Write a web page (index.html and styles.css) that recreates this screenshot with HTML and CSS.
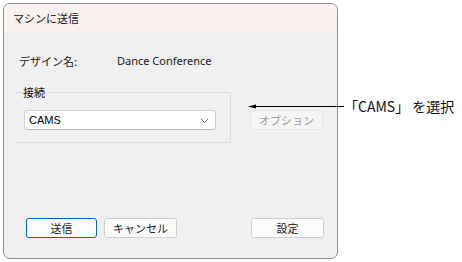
FILE: index.html
```html
<!DOCTYPE html>
<html lang="ja">
<head>
<meta charset="utf-8">
<link rel="stylesheet" href="styles.css">
</head>
<body>
<div class="stage">
  <div class="window">
    <div class="titlebar">マシンに送信</div>
    <div class="content">
      <div class="row-name">
        <span class="label">デザイン名:</span>
        <span class="value">Dance Conference</span>
      </div>
      <div class="mid">
        <fieldset class="group">
          <legend>接続</legend>
          <div class="combo">
            <span>CAMS</span>
            <svg class="chev" width="9" height="6" viewBox="0 0 9 6"><path d="M1 1 L4.5 4.5 L8 1" fill="none" stroke="#707070" stroke-width="1"/></svg>
          </div>
        </fieldset>
        <button class="btn disabled">オプション</button>
      </div>
      <div class="buttons">
        <button class="btn primary">送信</button>
        <button class="btn">キャンセル</button>
        <span class="spacer"></span>
        <button class="btn">設定</button>
      </div>
    </div>
  </div>
  <div class="callout">
    <svg class="arrow" width="96" height="7" viewBox="0 0 96 7"><path d="M0 3.5 L8 1.5 L8 5.5 Z" fill="#000"/><line x1="4" y1="3.5" x2="96" y2="3.5" stroke="#000" stroke-width="1.2"/></svg>
    <span class="note">「CAMS」 を選択</span>
  </div>
</div>
</body>
</html>
```
FILE: styles.css
```css
* { box-sizing: border-box; }
html, body { margin: 0; padding: 0; background: #ffffff; }
body {
  width: 462px; height: 262px; overflow: hidden;
  font-family: "Noto Sans CJK JP", "Liberation Sans", sans-serif;
}
.stage { position: relative; width: 462px; height: 262px; padding: 3px 0 0 3px; }
.window {
  width: 335px; height: 256px;
  border: 1px solid #8e8e8e;
  border-radius: 7px;
  background: #f0f0f0;
  overflow: hidden;
  display: flex; flex-direction: column;
}
.titlebar {
  height: 29px; flex: none;
  background: #f9f1ef;
  font-size: 11px; color: #1a1a1a;
  padding: 6px 0 0 9px;
  line-height: 16px;
}
.content { flex: 1; display: flex; flex-direction: column; padding: 21px 0 0 0; }
.row-name { display: flex; font-size: 11px; color: #1a1a1a; line-height: 14px; padding-left: 15px; }
.row-name .label { width: 98px; }
.row-name .value { font-family: "Segoe UI", "Noto Sans", "Liberation Sans", sans-serif; }
.mid { display: flex; align-items: flex-start; margin-top: 17px; }
.group {
  margin: 0 0 0 11px; padding: 0 0 0 9px;
  width: 216px; height: 58px;
  border: 1px solid #dcdcdc;
  border-left: none;
}
.group legend { font-size: 11px; padding: 0 3px 0 0; margin-left: -1px; color: #111; line-height: 14px; }
.combo {
  margin-top: 11px;
  width: 192px; height: 20px;
  background: #ffffff;
  border: 1px solid #d0d0d0; border-bottom-color: #b8b8b8;
  border-radius: 3px;
  display: flex; align-items: center; justify-content: space-between;
  padding: 0 6px 0 4px;
  font-family: "Liberation Sans", sans-serif; font-size: 11px; color: #000;
}
.chev { margin-top: 1px; }
.btn {
  height: 20px; width: 73px;
  font-family: "Noto Sans CJK JP", sans-serif; font-size: 11px; line-height: 16px;
  background: #fdfdfd; color: #1a1a1a;
  border: 1px solid #d0d0d0; border-radius: 3px; padding: 0;
}
.mid .btn { margin: 25px 0 0 19px; }
.btn.disabled { background: #f5f5f5; color: #9b9b9b; border-color: #e6e6e6; }
.btn.primary { border-color: #0a64c8; width: 71px; }
.buttons { display: flex; margin-top: 75px; padding-left: 22px; padding-right: 13px; gap: 7px; }
.buttons .spacer { flex: 1; }
.callout { position: absolute; left: 248px; top: 96px; display: flex; align-items: center; }
.note { font-family: "Noto Sans CJK JP", sans-serif; font-size: 14px; color: #111; }
```
